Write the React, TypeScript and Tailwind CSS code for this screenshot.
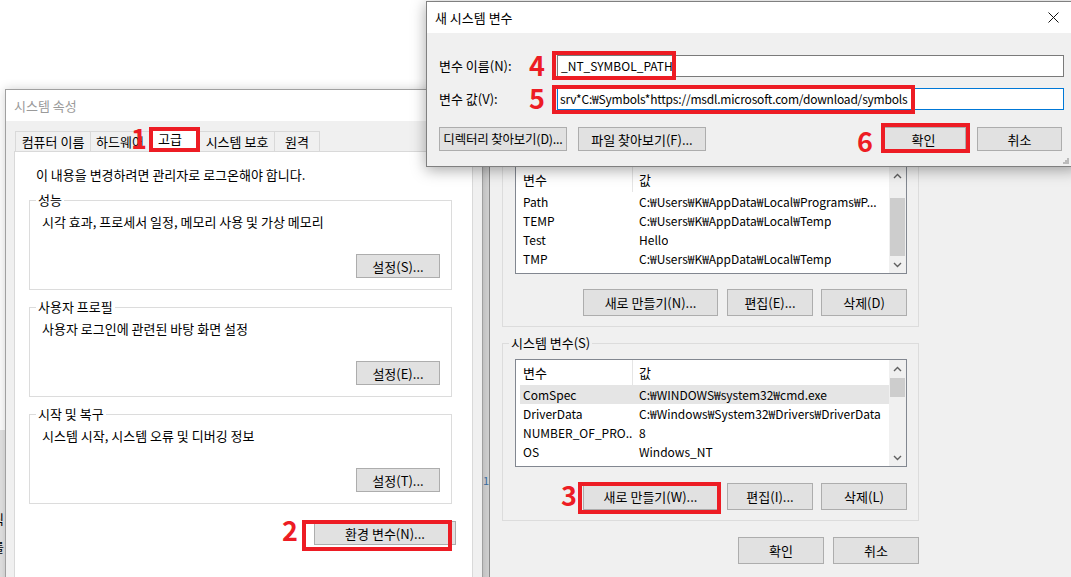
import React from "react";

const KR = "font-['Noto_Sans_CJK_KR','Noto_Sans',sans-serif]";

function Chevron({ up }: { up?: boolean }) {
  return (
    <svg width="9" height="6" viewBox="0 0 9 6" className="text-[#606060]">
      <polyline
        points={up ? "1,5 4.5,1.5 8,5" : "1,1 4.5,4.5 8,1"}
        fill="none"
        stroke="currentColor"
        strokeWidth="1.4"
      />
    </svg>
  );
}

function Btn({ label, className = "", size = "text-[13px]" }: { label: string; className?: string; size?: string }) {
  return (
    <div
      className={`flex shrink-0 items-center justify-center whitespace-nowrap border border-[#adadad] bg-[#e1e1e1] leading-none ${size} ${className}`}
    >
      {label}
    </div>
  );
}

type Row = { name: string; value: string; selected?: boolean };

function ListView({ rows, thumb, downClass }: { rows: Row[]; thumb: string; downClass: string }) {
  return (
    <div className="ml-[12px] flex h-[108px] w-[392px] border border-[#828790] bg-white">
      <div className="min-w-0 flex-1 overflow-hidden">
        <div className="flex h-[25px] items-center text-[13px]">
          <div className="w-[116px] pl-[7px]">변수</div>
          <div className="flex h-full flex-1 items-center border-l border-[#e5e5e5] pl-[6px]">값</div>
        </div>
        {rows.map((r) => (
          <div
            key={r.name}
            className={`ml-[4px] flex h-[19px] items-center whitespace-nowrap ${r.selected ? "bg-[#e5e5e5]" : ""}`}
          >
            <div className="w-[112px] shrink-0 overflow-hidden pl-[3px]">{r.name}</div>
            <div className="overflow-hidden pl-[7px]">{r.value}</div>
          </div>
        ))}
      </div>
      {/* scrollbar */}
      <div className="flex w-[17px] shrink-0 flex-col bg-[#f0f0f0]">
        <div className="flex h-[18px] items-center justify-center">
          <Chevron up />
        </div>
        <div className={`mx-[1px] bg-[#cdcdcd] ${thumb}`} />
        <div className={`flex h-[17px] items-center justify-center ${downClass}`}>
          <Chevron />
        </div>
      </div>
    </div>
  );
}

function GroupBox({ title, text, button }: { title: string; text: string; button: string }) {
  return (
    <div className="ml-[14px] mt-[17px] w-[423px] border border-[#dcdcdc] pb-[11px] first:mt-[10px]">
      <div className="-mt-[9px] ml-[6px] w-fit bg-white px-[2px] text-[13px] leading-[16px]">{title}</div>
      <div className="ml-[12px] mt-[6px] text-[13px] leading-[16px]">{text}</div>
      <div className="mr-[11px] mt-[24px] flex justify-end">
        <Btn label={button} className="h-[24px] w-[84px]" />
      </div>
    </div>
  );
}

const userVars: Row[] = [
  { name: "Path", value: "C:₩Users₩K₩AppData₩Local₩Programs₩P..." },
  { name: "TEMP", value: "C:₩Users₩K₩AppData₩Local₩Temp" },
  { name: "Test", value: "Hello" },
  { name: "TMP", value: "C:₩Users₩K₩AppData₩Local₩Temp" },
];

const sysVars: Row[] = [
  { name: "ComSpec", value: "C:₩WINDOWS₩system32₩cmd.exe", selected: true },
  { name: "DriverData", value: "C:₩Windows₩System32₩Drivers₩DriverData" },
  { name: "NUMBER_OF_PRO...", value: "8" },
  { name: "OS", value: "Windows_NT" },
  { name: "Path", value: "C:₩Program Files (x86)₩Common Files₩Oracle" },
];

export default function App() {
  const tabs = [
    { label: "컴퓨터 이름", w: "w-[75px]" },
    { label: "하드웨어", w: "w-[59px]" },
  ];
  return (
    <div className={`relative h-[577px] w-[1071px] overflow-hidden bg-white text-[12px] text-black ${KR}`}>
      {/* background windows */}
      <div className="absolute left-0 top-[430px] h-[147px] w-[6px] overflow-hidden bg-[#e4e4e4]">
        <div className="absolute -left-[8px] top-[82px] text-[13px] leading-none">릭</div>
        <div className="absolute -left-[8px] top-[110px] text-[13px] leading-none">를</div>
      </div>
      <div className="absolute left-[481px] top-[150px] h-[427px] w-[9px] bg-[#d4d4d4]">
        <div className="ml-[2px] mt-[325px] text-[11px] leading-none text-[#3a6ea5]">1</div>
      </div>

      {/* 시스템 속성 */}
      <div className="absolute left-[5px] top-[89px] h-[510px] w-[478px] border border-[#a0a0a0] bg-[#f0f0f0] shadow-[0_0_10px_rgba(0,0,0,0.18)]">
        <div className="flex h-[31px] items-center bg-white pl-[8px] text-[13px] text-[#9a9a9a]">시스템 속성</div>
        <div className="pl-[8px] pr-[9px] pt-[6px] text-[13px]">
          <div className="flex h-[24px] items-end pl-[1px]">
            {tabs.map((t) => (
              <div
                key={t.label}
                className={`flex h-[20px] items-center justify-center border-l border-t border-[#d9d9d9] ${t.w}`}
              >
                {t.label}
              </div>
            ))}
            <div className="flex h-[24px] w-[51px] items-center bg-white pl-[9px]">고급</div>
            <div className="flex h-[20px] w-[74px] items-center justify-center border-t border-[#d9d9d9]">시스템 보호</div>
            <div className="flex h-[20px] w-[46px] items-center justify-center border-l border-r border-t border-[#d9d9d9]">원격</div>
          </div>
          <div className="h-[440px] border border-[#d9d9d9] bg-white">
            <div className="pl-[21px] pt-[15px] leading-[16px]">이 내용을 변경하려면 관리자로 로그온해야 합니다.</div>
            <GroupBox title="성능" text="시각 효과, 프로세서 일정, 메모리 사용 및 가상 메모리" button="설정(S)..." />
            <GroupBox title="사용자 프로필" text="사용자 로그인에 관련된 바탕 화면 설정" button="설정(E)..." />
            <GroupBox title="시작 및 복구" text="시스템 시작, 시스템 오류 및 디버깅 정보" button="설정(T)..." />
            <div className="ml-[14px] mt-[17px] flex w-[423px] justify-end">
              <Btn label="환경 변수(N)..." className="-mr-[4px] h-[24px] w-[142px]" />
            </div>
          </div>
        </div>
      </div>

      {/* 환경 변수 */}
      <div className="absolute left-[489px] top-[140px] h-[460px] w-[600px] border-l border-[#8a8a8a] bg-[#f0f0f0]">
        <div className="w-[441px] pl-[12px]">
          <div className="w-[417px] border border-t-0 border-[#dcdcdc] pb-[10px] pt-[26px]">
            <ListView rows={userVars} thumb="mt-[13px] h-[58px]" downClass="mt-auto" />
            <div className="ml-[12px] mt-[15px] flex w-[392px] justify-end gap-[8px]">
              <Btn label="새로 만들기(N)..." className="mr-px h-[27px] w-[135px]" />
              <Btn label="편집(E)..." className="h-[27px] w-[86px]" />
              <Btn label="삭제(D)" className="h-[27px] w-[86px]" />
            </div>
          </div>
          <div className="mt-[16px] w-[417px] border border-[#dcdcdc] pb-[10px]">
            <div className="-mt-[9px] ml-[6px] w-fit bg-[#f0f0f0] px-[2px] text-[13px] leading-[16px]">시스템 변수(S)</div>
            <div className="mt-[8px]">
              <ListView rows={sysVars} thumb="h-[19px]" downClass="mt-auto" />
            </div>
            <div className="ml-[12px] mt-[16px] flex w-[392px] justify-end gap-[8px]">
              <Btn label="새로 만들기(W)..." className="mr-px h-[27px] w-[135px]" />
              <Btn label="편집(I)..." className="h-[27px] w-[86px]" />
              <Btn label="삭제(L)" className="h-[27px] w-[86px]" />
            </div>
          </div>
          <div className="mt-[16px] flex w-[417px] justify-end gap-[9px]">
            <Btn label="확인" className="h-[27px] w-[86px]" />
            <Btn label="취소" className="h-[27px] w-[86px]" />
          </div>
        </div>
      </div>

      {/* 새 시스템 변수 */}
      <div className="absolute left-[426px] top-[1px] h-[166px] w-[652px] border border-[#808080] bg-[#f0f0f0] shadow-[0_3px_14px_rgba(0,0,0,0.35)]">
        <div className="flex h-[31px] items-center justify-between bg-white pl-[8px] pr-[18px]">
          <span className="text-[13px]">새 시스템 변수</span>
          <svg width="11" height="11" viewBox="0 0 11 11">
            <path d="M0.5 0.5 L10.5 10.5 M10.5 0.5 L0.5 10.5" stroke="#111" strokeWidth="1" />
          </svg>
        </div>
        <div className="pl-[12px]">
          <div className="mt-[22px] flex h-[22px] items-center">
            <div className="w-[118px] text-[13px]">변수 이름(N):</div>
            <div className="flex h-full w-[507px] items-center border border-[#7a7a7a] bg-white pl-[3px]">_NT_SYMBOL_PATH</div>
          </div>
          <div className="mt-[11px] flex h-[22px] items-center">
            <div className="w-[118px] text-[13px]">변수 값(V):</div>
            <div className="flex h-full w-[507px] items-center whitespace-nowrap border border-[#0078d7] bg-white pl-[2px] tracking-[-0.2px]">
              srv*C:₩Symbols*https://msdl.microsoft.com/download/symbols
            </div>
          </div>
          <div className="mt-[17px] flex w-[625px] gap-[11px]">
            <Btn label="디렉터리 찾아보기(D)..." size="text-[12.5px] tracking-[-0.2px]" className="h-[24px] w-[128px]" />
            <Btn label="파일 찾아보기(F)..." className="h-[24px] w-[128px]" />
            <Btn label="확인" className="ml-auto h-[24px] w-[85px] border-[#0078d7]" />
            <Btn label="취소" className="mr-[2px] h-[24px] w-[85px]" />
          </div>
        </div>
        <svg className="absolute bottom-[2px] right-[8px]" width="6" height="6" viewBox="0 0 6 6">
          <rect x="4" y="0" width="2" height="2" fill="#bbb" />
          <rect x="2" y="2" width="2" height="2" fill="#bbb" />
          <rect x="4" y="2" width="2" height="2" fill="#bbb" />
          <rect x="0" y="4" width="2" height="2" fill="#bbb" />
          <rect x="2" y="4" width="2" height="2" fill="#bbb" />
          <rect x="4" y="4" width="2" height="2" fill="#bbb" />
        </svg>
      </div>

      {/* annotations */}
      <div className="absolute left-[149px] top-[127px] h-[25px] w-[51px] border-[4px] border-[#ed1c24]" />
      <div className="absolute left-[302px] top-[520px] h-[31px] w-[150px] border-[4px] border-[#ed1c24]" />
      <div className="absolute left-[578px] top-[482px] h-[32px] w-[143px] border-[4px] border-[#ed1c24]" />
      <div className="absolute left-[552px] top-[51px] h-[29px] w-[124px] border-[4px] border-[#ed1c24]" />
      <div className="absolute left-[552px] top-[85px] h-[29px] w-[363px] border-[4px] border-[#ed1c24]" />
      <div className="absolute left-[881px] top-[123px] h-[30px] w-[89px] border-[4px] border-[#ed1c24]" />

      <span className="absolute left-[131px] top-[124px] text-[27px] font-bold leading-none text-[#ed1c24]">1</span>
      <span className="absolute left-[282px] top-[516px] text-[27px] font-bold leading-none text-[#ed1c24]">2</span>
      <span className="absolute left-[561px] top-[481px] text-[27px] font-bold leading-none text-[#ed1c24]">3</span>
      <span className="absolute left-[529px] top-[51px] text-[27px] font-bold leading-none text-[#ed1c24]">4</span>
      <span className="absolute left-[529px] top-[84px] text-[27px] font-bold leading-none text-[#ed1c24]">5</span>
      <span className="absolute left-[857px] top-[127px] text-[27px] font-bold leading-none text-[#ed1c24]">6</span>
    </div>
  );
}
